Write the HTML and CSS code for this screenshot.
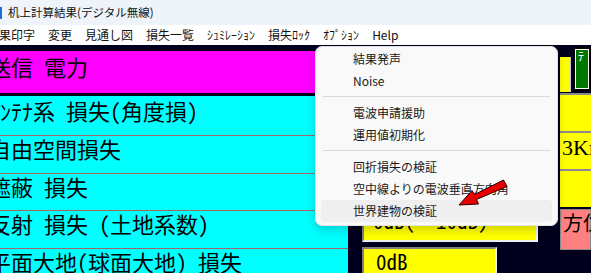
FILE: index.html
```html
<!DOCTYPE html>
<html lang="ja">
<head>
  <meta charset="UTF-8" />
  <title>机上計算結果(デジタル無線)</title>
  <link rel="stylesheet" href="styles.css">
</head>
<body>
  <div class="window">
    <div class="titlebar">
      <span class="app-icon"></span>
      <span class="title">机上計算結果(デジタル無線)</span>
    </div>

    <div class="menubar">
      <span>結果印字</span>
      <span>変更</span>
      <span>見通し図</span>
      <span>損失一覧</span>
      <span class="half">ｼｭﾐﾚｰｼｮﾝ</span>
      <span>損失<span class="half">ﾛｯｸ</span></span>
      <span class="half">ｵﾌﾟｼｮﾝ</span>
      <span>Help</span>
    </div>

    <div class="main">
      <!-- 項目名 -->
      <div class="labels">
        <div class="row power">送信 電力</div>
        <div class="row cyan first">ｱﾝﾃﾅ系 損失(角度損)</div>
        <div class="row cyan">自由空間損失</div>
        <div class="row cyan">遮蔽 損失</div>
        <div class="row cyan">反射 損失 (土地系数)</div>
        <div class="row cyan last">平面大地(球面大地) 損失</div>
      </div>

      <!-- 計算値 -->
      <div class="values">
        <div class="cell c1"></div>
        <div class="cell c2"></div>
        <div class="cell c3"></div>
        <div class="cell c4"></div>
        <div class="cell c5">0dB(  10dB)</div>
        <div class="cell c6">0dB</div>
      </div>

      <!-- 右側 -->
      <div class="side">
        <div class="side-top">
          <div class="side-yellow"></div>
          <div class="side-green">ﾃ</div>
        </div>
        <div class="side-cells">
          <div class="side-cell"></div>
          <div class="side-cell km">3Km</div>
          <div class="side-cell"></div>
        </div>
        <div class="side-pink">方位</div>
      </div>
    </div>

    <!-- オプション メニュー -->
    <div class="dropdown">
      <div class="item">結果発声</div>
      <div class="item">Noise</div>
      <div class="sep"></div>
      <div class="item">電波申請援助</div>
      <div class="item">運用値初期化</div>
      <div class="sep"></div>
      <div class="item">回折損失の検証</div>
      <div class="item">空中線よりの電波垂直方向角</div>
      <div class="item hover">世界建物の検証</div>
    </div>

    <svg class="arrow" width="62" height="34" viewBox="450 176 62 34">
      <polygon points="459,205 472,190.5 474.5,194.5 503.5,180 507,186.5 476.5,199.5 478.5,204" fill="#e80000" stroke="#300000" stroke-width="1" stroke-linejoin="round"/>
    </svg>
  </div>
</body>
</html>
```

FILE: styles.css
```css
body {
  margin: 0;
  font-family: "Noto Sans CJK JP", sans-serif;
  overflow: hidden;
}
.window {
  position: relative;
  width: 591px;
  height: 273px;
  overflow: hidden;
  background: #00001e;
}
.titlebar {
  height: 25px;
  background: #eef4f9;
  display: flex;
  align-items: center;
}
.app-icon {
  width: 2px;
  height: 12px;
  background: #1e6cd4;
  margin-right: 6px;
}
.title {
  font-size: 11.5px;
  line-height: 1;
  color: #111;
}
.menubar {
  height: 20px;
  background: #fff;
  display: flex;
  align-items: center;
  gap: 13px;
  margin-left: -13px;
  font-size: 12px;
  line-height: 1;
  color: #111;
}
.main {
  display: flex;
  height: 228px;
}
/* 等幅の表示 (半角 = 全角の半分) */
.labels,
.cell,
.side-pink {
  font-family: "Noto Sans Mono CJK JP", "Noto Sans CJK JP", monospace;
  font-feature-settings: "hwid" 1;
  white-space: pre;
}
.labels {
  width: 359px;
  margin-left: -11px;
  padding-top: 6px;
  display: flex;
  flex-direction: column;
  font-size: 22px;
  line-height: 24px;
  color: #000;
  font-weight: 300;
}
.row {
  box-sizing: border-box;
}
.row.power {
  background: #ff00ff;
  height: 42px;
  padding-top: 3px;
  margin-bottom: 3px;
}
.row.cyan {
  background: #00ffff;
  border-bottom: 1px solid #a06868;
  height: 38px;
}
.row.first {
  height: 41px;
  padding-top: 2px;
}
.row.last {
  border-bottom: none;
  flex: 1;
}
.values {
  width: 198px;
  padding-left: 14px;
  display: flex;
  flex-direction: column;
}
.cell {
  box-sizing: border-box;
  width: 176px;
  background: #ffff00;
  border: 2px solid;
  border-color: #808080 #f0f0f0 #f0f0f0 #808080;
  font-size: 21px;
  line-height: 24px;
  padding-left: 9px;
  font-weight: 300;
}
.c1 { margin-top: 12px; height: 36px; }
.c2 { margin-top: 4px; height: 35px; }
.c3 { margin-top: 4px; height: 34px; }
.c4 { margin-top: 4px; height: 32px; }
.c5 { margin-top: 4px; height: 37px; padding-top: 0; }
.c6 { margin-top: 5px; width: 135px; flex: 1; border-bottom: none; padding-left: 12px; }
.side {
  width: 31px;
  display: flex;
  flex-direction: column;
}
.side-top {
  display: flex;
  height: 48px;
}
.side-yellow {
  width: 18px;
  height: 35px;
  margin-top: 12px;
  background: #ffff00;
  border-right: 1px solid #c8c8c8;
}
.side-green {
  margin-top: 2px;
  margin-left: 2px;
  width: 20px;
  height: 40px;
  background: #007800;
  border: 2px solid #000;
  outline: 1px solid #fff;
  outline-offset: -3px;
  color: #fff;
  font-size: 12px;
  line-height: 14px;
  padding-left: 3px;
}
.side-cells {
  background: #ffff00;
  border-top: 2px solid #8a8a8a;
}
.side-cell {
  box-sizing: border-box;
  height: 38px;
  border-bottom: 2px solid #8a8a8a;
}
.side-cell:last-child {
  height: 36px;
  border-bottom: none;
}
.km {
  font-family: "Liberation Serif", serif;
  font-size: 22px;
  line-height: 26px;
  padding-left: 2px;
  padding-top: 2px;
  white-space: nowrap;
}
.side-pink {
  box-sizing: border-box;
  margin-top: 2px;
  height: 41px;
  background: #ff8080;
  border: 1px solid #888;
  font-size: 20px;
  line-height: 24px;
  padding-left: 2px;
  padding-top: 1px;
  font-weight: 300;
}
.dropdown {
  position: absolute;
  left: 315px;
  top: 46px;
  width: 243px;
  box-sizing: border-box;
  padding: 1px 5px 3px;
  background: #f9f9f9;
  border: 1px solid #e2e2e2;
  border-radius: 7px;
  box-shadow: 0 4px 10px rgba(0, 0, 0, 0.18);
  font-size: 12px;
  color: #1a1a1a;
}
.item {
  height: 22px;
  line-height: 22px;
  padding-left: 32px;
  border-radius: 4px;
  white-space: nowrap;
  overflow: hidden;
}
.item.hover {
  background: #efefef;
}
.sep {
  height: 1px;
  margin: 4px 2px 5px;
  background: #d9d9d9;
}
.arrow {
  position: absolute;
  left: 450px;
  top: 176px;
}
```
